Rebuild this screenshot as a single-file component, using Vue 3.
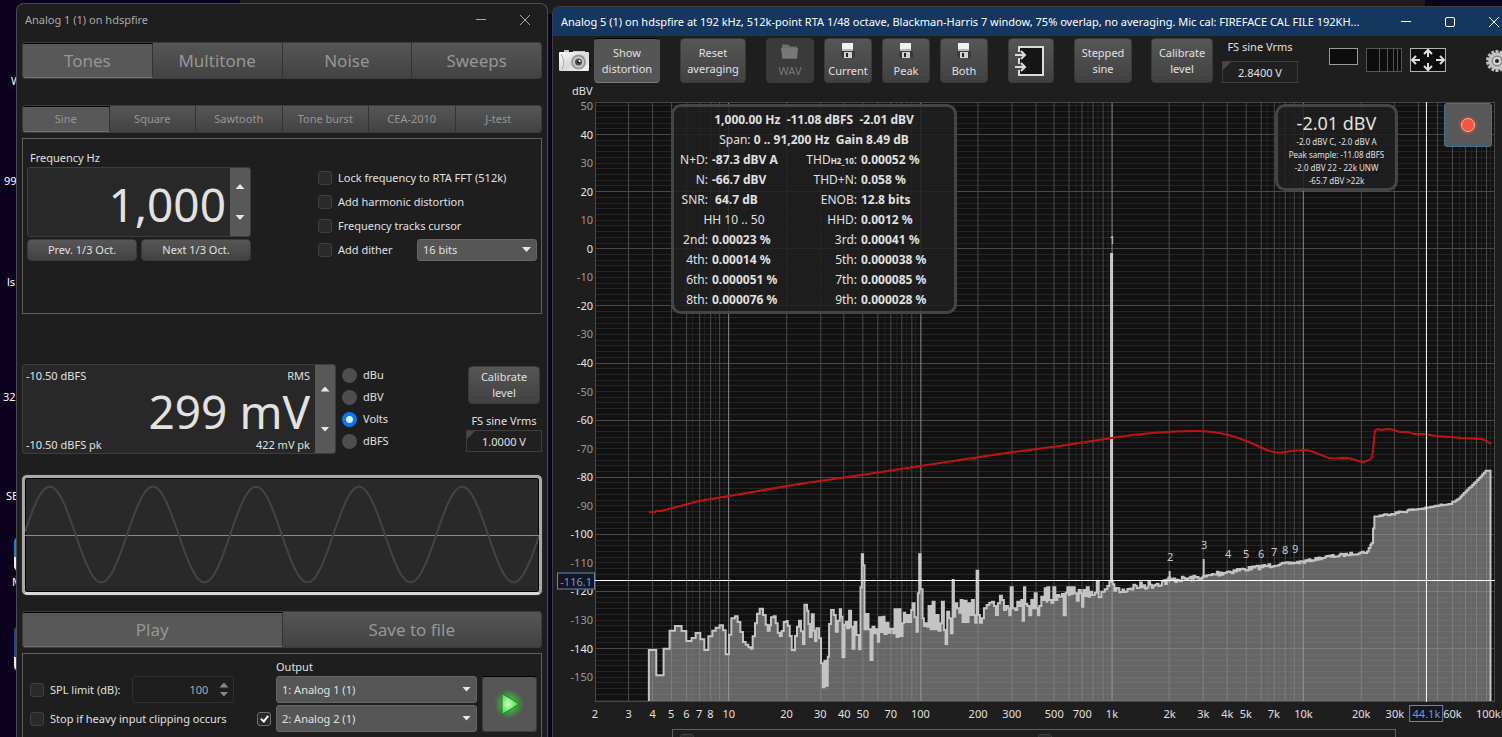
<script setup>
import { ref } from 'vue'

const mainTabs = ['Tones', 'Multitone', 'Noise', 'Sweeps']
const toneTabs = ['Sine', 'Square', 'Sawtooth', 'Tone burst', 'CEA-2010', 'J-test']
const mainTab = ref('Tones')
const toneTab = ref('Sine')
const units = ['dBu', 'dBV', 'Volts', 'dBFS']
const unit = ref('Volts')
const options = ['Lock frequency to RTA FFT (512k)', 'Add harmonic distortion', 'Frequency tracks cursor']

const desktopLabels = [
  { text: 'W', x: 11, y: 73 },
  { text: '99', x: 4, y: 173 },
  { text: 'ls', x: 7, y: 274 },
  { text: '32', x: 3, y: 389 },
  { text: 'SE', x: 6, y: 488 },
  { text: 'M', x: 12, y: 574 }
]

/* Plot geometry, in view box units */
const W = 899
const H = 600
const DB_TOP = 51.4
const DB_BOTTOM = -158.7
const F_MIN = 2
const F_MAX = 100000
const fx = f => (Math.log10(f / F_MIN) / Math.log10(F_MAX / F_MIN)) * W
const dy = d => ((DB_TOP - d) / (DB_TOP - DB_BOTTOM)) * H
const px = v => (v / W) * 100 + '%'
const py = v => (v / H) * 100 + '%'
const snap = v => Math.round(v - 0.5) + 0.5

const minorRows = []
for (let d = 50; d > DB_BOTTOM; d -= 2) if (d % 20 !== 0) minorRows.push(snap(dy(d)))
const majorRows = []
for (let d = 40; d > DB_BOTTOM; d -= 20) majorRows.push(snap(dy(d)))

const decades = [10, 100, 1000, 10000].map(f => snap(fx(f)))
const freqLines = []
const halfLines = []
for (const base of [1, 10, 100, 1000, 10000]) {
  for (let m = 2; m < 10; m++) {
    if (base * m > F_MIN) freqLines.push(snap(fx(base * m)))
    if (m > 5) halfLines.push(snap(fx(base * (m + 0.5))))
  }
}
const rowsPath = rows => rows.map(y => `M0 ${y}H${W}`).join('')
const colsPath = cols => cols.map(x => `M${x} 0V${H}`).join('')

const dbLabels = []
for (let d = 50; d >= -150; d -= 10) dbLabels.push({ d, top: py(dy(d)), major: d % 20 === 0 })

const freqLabels = [
  [2, '2'], [3, '3'], [4, '4'], [5, '5'], [6, '6'], [7, '7'], [8, '8'], [10, '10'], [20, '20'],
  [30, '30'], [40, '40'], [50, '50'], [70, '70'], [100, '100'], [200, '200'], [300, '300'],
  [500, '500'], [700, '700'], [1000, '1k'], [2000, '2k'], [3000, '3k'], [4000, '4k'], [5000, '5k'],
  [7000, '7k'], [10000, '10k'], [20000, '20k'], [30000, '30k'], [40000, '40k'], [60000, '60k'],
  [100000, '100kHz']
].map(([f, text]) => ({ text, left: px(fx(f)) }))

/* Spectrum bins as [start, level] pairs, three counts to one view box unit */
const bins = [
  298, 450, 320, 526, 342, 446, 360, 392, 376, 378, 396, 393, 410, 423, 426, 414, 438, 399, 452, 418,
  464, 450, 476, 409, 488, 392, 498, 383, 510, 376, 520, 391, 528, 463, 538, 404, 545, 355, 556, 349,
  564, 366, 572, 396, 580, 426, 588, 434, 596, 442, 604, 446, 609, 409, 616, 370, 622, 341, 630, 326,
  640, 345, 648, 374, 654, 392, 660, 376, 664, 352, 672, 349, 678, 370, 684, 398, 690, 408, 696, 393,
  702, 366, 710, 363, 714, 377, 720, 408, 726, 450, 732, 451, 736, 408, 742, 380, 748, 362, 754, 394,
  760, 432, 764, 314, 772, 332, 776, 372, 780, 411, 786, 343, 792, 392, 796, 423, 800, 385, 808, 415,
  814, 490, 819, 562, 824, 482, 828, 557, 834, 470, 838, 372, 844, 330, 852, 345, 858, 395, 864, 362,
  870, 328, 874, 350, 878, 472, 884, 374, 888, 365, 892, 385, 898, 332, 904, 380, 908, 446, 914, 366,
  920, 405, 928, 448, 932, 262, 936, 163, 940, 196, 944, 388, 950, 342, 956, 388, 962, 480, 968, 380,
  974, 400, 980, 388, 984, 425, 988, 352, 994, 396, 1000, 350, 1004, 402, 1010, 368, 1016, 398,
  1022, 386, 1030, 400, 1034, 328, 1040, 411, 1046, 328, 1052, 408, 1058, 370, 1062, 338, 1066, 366,
  1072, 345, 1078, 366, 1084, 330, 1088, 310, 1094, 352, 1100, 395, 1104, 280, 1108, 163, 1112, 268,
  1118, 355, 1122, 378, 1128, 370, 1132, 380, 1136, 318, 1142, 388, 1148, 305, 1154, 388, 1160, 345,
  1166, 392, 1172, 370, 1176, 305, 1182, 390, 1187, 432, 1192, 335, 1198, 355, 1203, 400, 1208, 240,
  1212, 350, 1216, 310,
  1222, 325, 1228, 338, 1232, 300, 1238, 366, 1244, 302, 1250, 366, 1256, 310, 1262, 345, 1266, 300,
  1272, 345, 1276, 368, 1280, 212, 1285, 345, 1290, 368, 1296, 355, 1302, 325, 1310, 315, 1318, 308,
  1326, 305, 1332, 318, 1338, 345, 1344, 310, 1350, 287, 1356, 300, 1362, 330, 1368, 318, 1374, 325,
  1378, 346, 1382, 262, 1388, 325, 1396, 330, 1402, 305, 1408, 318, 1414, 300, 1418, 362, 1422, 262,
  1426, 312, 1432, 318, 1438, 346, 1444, 300, 1448, 325, 1454, 280, 1460, 325, 1464, 346, 1468, 318,
  1474, 290, 1480, 300, 1484, 265, 1490, 305, 1492, 262, 1498, 300, 1504, 308, 1510, 262, 1516, 300,
  1522, 285, 1528, 290, 1536, 282, 1541, 346, 1547, 278, 1552, 262, 1556, 285, 1560, 262, 1564, 282,
  1568, 262, 1574, 280, 1580, 302, 1586, 270, 1592, 280, 1596, 320, 1600, 270, 1604, 288, 1610, 262,
  1616, 290, 1620, 275, 1626, 285, 1634, 278, 1640, 245, 1646, 292, 1654, 275, 1664, 268, 1672, 258,
  1678, 245
]

/* Noise floor above 1 kHz: [start, level, ripple] */
const floor = [
  [1688, 262, 9], [1712, 275, 12], [1740, 262, 12], [1800, 254, 12], [1860, 240, 8], [1960, 232, 7],
  [2000, 220, 9], [2030, 215, 8], [2080, 208, 6], [2170, 195, 4], [2260, 185, 4], [2320, 172, 5],
  [2380, 165, 4], [2450, 155, 3], [2463, 130, 0], [2472, 50, 3], [2530, 40, 4], [2580, 30, 2],
  [2620, 25, 2], [2700, 10, 2], [2725, -5, 1], [2760, -40, 0], [2780, -60, 0], [2806, -88, 0],
  [2820, -88, 0]
]

function buildSpectrum() {
  const pts = []
  for (let i = 0; i < bins.length; i += 2) pts.push([bins[i], bins[i + 1]])
  let seed = 7
  const rnd = () => {
    seed = (seed * 16807) % 2147483647
    return seed / 2147483647 - 0.5
  }
  for (let i = 0; i < floor.length - 1; i++) {
    const [x0, y0, a] = floor[i]
    const [x1, y1] = floor[i + 1]
    for (let x = x0; x < x1; x += 5) {
      pts.push([x, y0 + ((y1 - y0) * (x - x0)) / (x1 - x0) + rnd() * 2 * a])
    }
  }
  const X = v => (v / 3 - 45.5).toFixed(1)
  const Y = v => (v / 3 + 398).toFixed(1)
  let d = `M${X(298)} ${H - 1}`
  for (const [x, y] of pts) d += `H${X(x)}V${Y(y)}`
  return d + `H${X(2820)}V${H - 1}`
}
const spectrum = buildSpectrum()
const harmonicSpikes = 'M574 480V469M608 476V457'

const limit =
  'M54 410H60L61 409H66L70 408L104 399L134 394L204 382L266 373L325 364L404 352L464 344L516 336Q560 329 600 329' +
  'C625 329 642 335 660 343C674 350 682 352 690 350C702 348 710 347 718 350C728 354 734 358 744 356' +
  'C756 354 758 359 767 360C778 357 776 360 779 329Q781 326 785 328L793 327L798 328L804 330L812 330' +
  'L818 332L828 332L840 334L854 335L866 336L886 337Q892 339 895 342'

const harmonics = [
  ['1', 516.5, 138], ['2', 574.5, 455], ['3', 608.5, 443], ['4', 632.5, 452], ['5', 650.5, 452],
  ['6', 665.5, 452], ['7', 678.5, 450], ['8', 689.5, 448], ['9', 699.5, 447]
].map(([text, x, y]) => ({ text, left: px(x), top: py(y) }))

const cursorX = snap(fx(44100))
const cursorY = snap(dy(-116.3))

const readings = [
  ['2nd:', '0.00023 %', '3rd:', '0.00041 %'],
  ['4th:', '0.00014 %', '5th:', '0.000038 %'],
  ['6th:', '0.000051 %', '7th:', '0.000085 %'],
  ['8th:', '0.000076 %', '9th:', '0.000028 %']
]

let sine = ''
for (let x = 0; x <= 512; x += 4) {
  sine += `${x ? 'L' : 'M'}${x} ${(56.5 - 48 * Math.sin(((x + 1) / 102.7) * 2 * Math.PI)).toFixed(1)}`
}

const gearTeeth = Array.from({ length: 14 }, (_, i) => `rotate(${(i * 360) / 14} 11 11)`)
</script>

<template>
  <div class="desktop">
    <span class="desk-title">Photo - 4oor</span>
    <span
      v-for="l in desktopLabels"
      :key="l.text"
      class="desk-label"
      :style="{ left: l.x + 'px', top: l.y + 'px' }"
    >{{ l.text }}</span>
    <i class="desk-icon first"></i>
    <i class="desk-icon second"></i>
    <div class="behind"></div>

    <section class="window generator">
      <header class="titlebar">
        <h1>Analog 1 (1) on hdspfire</h1>
        <button aria-label="Minimize"><svg width="12" height="12"><path d="M1 5.500h10" /></svg></button>
        <button aria-label="Close"><svg width="12" height="12"><path d="M1 1l10 10M11 1L1 11" /></svg></button>
      </header>

      <nav class="tabs big">
        <button v-for="t in mainTabs" :key="t" :class="{ on: t === mainTab }" @click="mainTab = t">{{ t }}</button>
      </nav>
      <nav class="tabs small">
        <button v-for="t in toneTabs" :key="t" :class="{ on: t === toneTab }" @click="toneTab = t">{{ t }}</button>
      </nav>

      <div class="panel tone">
        <div class="freq">
          <label for="freq">Frequency Hz</label>
          <div class="spinner">
            <input id="freq" class="huge" value="1,000" />
            <div class="steps">
              <button aria-label="Increase frequency"><i class="up"></i></button>
              <button aria-label="Decrease frequency"><i class="down"></i></button>
            </div>
          </div>
          <div class="thirds">
            <button class="btn">Prev. 1/3 Oct.</button>
            <button class="btn">Next 1/3 Oct.</button>
          </div>
        </div>
        <div class="options">
          <label v-for="o in options" :key="o" class="check"><input type="checkbox" />{{ o }}</label>
          <div class="dither">
            <label class="check"><input type="checkbox" />Add dither</label>
            <span class="select">
              <select aria-label="Dither bits"><option>16 bits</option></select>
            </span>
          </div>
        </div>
      </div>

      <div class="level">
        <div class="spinner">
          <div class="readout">
            <span>-10.50 dBFS</span><span class="r">RMS</span>
            <input class="huge" aria-label="Level" value="299 mV" />
            <span>-10.50 dBFS pk</span><span class="r">422 mV pk</span>
          </div>
          <div class="steps">
            <button aria-label="Increase level"><i class="up"></i></button>
            <button aria-label="Decrease level"><i class="down"></i></button>
          </div>
        </div>
        <div class="units">
          <label v-for="u in units" :key="u"><input v-model="unit" type="radio" name="unit" :value="u" />{{ u }}</label>
        </div>
        <div class="calibrate">
          <button class="btn">Calibrate<br />level</button>
          <label for="fs1">FS sine Vrms</label>
          <span class="field"><input id="fs1" value="1.0000 V" /></span>
        </div>
      </div>

      <div class="wave">
        <svg viewBox="0 0 512 114" preserveAspectRatio="none">
          <path class="mid" d="M0 57.5H512" />
          <path class="sine" :d="sine" />
        </svg>
      </div>

      <nav class="tabs action">
        <button class="on">Play</button>
        <button>Save to file</button>
      </nav>

      <div class="panel output">
        <span class="out-label">Output</span>
        <div class="spl">
          <label class="check"><input type="checkbox" />SPL limit (dB):</label>
          <span class="number">
            <input aria-label="SPL limit" value="100" />
            <span class="ticks"><i class="up"></i><i class="down"></i></span>
          </span>
        </div>
        <span class="select first">
          <select aria-label="Output 1"><option>1: Analog 1 (1)</option></select>
        </span>
        <label class="check clip"><input type="checkbox" />Stop if heavy input clipping occurs</label>
        <label class="check second-on"><input type="checkbox" checked aria-label="Enable second output" /></label>
        <span class="select second">
          <select aria-label="Output 2"><option>2: Analog 2 (1)</option></select>
        </span>
        <button class="play" aria-label="Start">
          <svg width="36" height="36" viewBox="0 0 36 36">
            <defs>
              <radialGradient id="glow"><stop offset=".3" stop-color="#35e835" stop-opacity=".75" /><stop offset="1" stop-color="#35c835" stop-opacity="0" /></radialGradient>
              <radialGradient id="core" cx=".35" cy=".5"><stop offset="0" stop-color="#d6ffd0" /><stop offset="1" stop-color="#3ce03c" /></radialGradient>
            </defs>
            <circle cx="17" cy="18" r="15" fill="url(#glow)" />
            <path d="M10 7.500v21l17.500-10.500z" fill="url(#core)" stroke="#118a14" />
          </svg>
        </button>
      </div>
    </section>

    <section class="window analyzer">
      <header class="titlebar">
        <h1>Analog 5 (1) on hdspfire at 192 kHz, 512k-point RTA 1/48 octave, Blackman-Harris 7 window, 75% overlap, no averaging. Mic cal: FIREFACE CAL FILE 192KH...</h1>
        <button aria-label="Minimize"><svg width="12" height="12"><path d="M1 5.500h10" /></svg></button>
        <button aria-label="Maximize"><svg width="12" height="12"><rect x="1.500" y="1.500" width="9" height="9" rx="1.500" /></svg></button>
        <button aria-label="Close"><svg width="12" height="12"><path d="M1 1l10 10M11 1L1 11" /></svg></button>
      </header>

      <div class="toolbar">
        <button class="plain camera" aria-label="Capture">
          <svg width="31" height="22" viewBox="0 0 31 22">
            <defs><linearGradient id="body" x1="0" y1="0" x2="1" y2="1"><stop offset="0" stop-color="#fff" /><stop offset=".5" stop-color="#d8d8d8" /><stop offset="1" stop-color="#f4f4f4" /></linearGradient></defs>
            <path d="M5 0h5v2H5zM14 1h12v3H14z" fill="#c9c9c9" />
            <rect x="0" y="2" width="30" height="19" rx="1" fill="url(#body)" />
            <path d="M2 4q5 8 1 15" fill="none" stroke="#aaa" />
            <circle cx="19.500" cy="12" r="7.500" fill="#999" />
            <circle cx="19.500" cy="12" r="5.500" fill="#c8c8c8" />
            <circle cx="19.500" cy="12" r="3.500" fill="#505050" />
            <circle cx="19.500" cy="12" r="1.500" fill="#111" />
            <circle cx="20.500" cy="11" r="1" fill="#fff" />
          </svg>
        </button>
        <button class="btn pressed distortion">Show<br />distortion</button>
        <button class="btn reset">Reset<br />averaging</button>
        <div class="saves">
          <button class="btn" disabled>
            <svg width="18" height="18" viewBox="0 0 18 18"><path d="M1 2.500h6l2 2h7v12H1.500z" fill="#6e6e6e" /><path d="M0 6h17l-1 10.500H1.500z" fill="#787878" /></svg>
            WAV
          </button>
          <button v-for="s in ['Current', 'Peak', 'Both']" :key="s" class="btn">
            <svg width="18" height="18" viewBox="0 0 18 18">
              <rect x="3" y="1" width="11" height="8" fill="#eef3f6" />
              <path d="M3 7h11v2H3z" fill="#b4bcc2" />
              <path d="M2 9h14v7H4l-2-2z" fill="#3a3a3a" />
              <rect x="5" y="10" width="8" height="6" fill="#d2d2d2" />
              <rect x="7" y="11" width="2" height="4" fill="#222" />
            </svg>
            {{ s }}
          </button>
        </div>
        <button class="btn import" aria-label="Import">
          <svg width="32" height="32" viewBox="0 0 32 32">
            <rect x="4" y="2" width="24" height="28" fill="#151515" stroke="#dcdcdc" stroke-width="2" />
            <path d="M3 10h4M3 22h4" stroke="#4a4a4a" stroke-width="6" />
            <path d="M0 10h10M6 6l4 4-4 4M0 22h10M6 18l4 4-4 4" fill="none" stroke="#dcdcdc" stroke-width="2" />
          </svg>
        </button>
        <button class="btn stepped">Stepped<br />sine</button>
        <button class="btn cal">Calibrate<br />level</button>
        <div class="fs">
          <label for="fs2">FS sine Vrms</label>
          <span class="field"><input id="fs2" value="2.8400 V" /></span>
        </div>
        <div class="views">
          <button class="plain" aria-label="Single view"><svg width="29" height="26"><rect x=".5" y="1.500" width="28" height="16" fill="#0d0d0d" stroke="#9a9a9a" /></svg></button>
          <button class="plain" aria-label="Grid view"><svg width="36" height="26"><rect x=".5" y="1.500" width="35" height="23" fill="#0d0d0d" stroke="#555" /><path d="M13.500 1v24M21.500 1v24M27.500 1v24M31.500 1v24" stroke="#555" /></svg></button>
          <button class="plain" aria-label="Fit to window">
            <svg width="36" height="26"><rect x=".5" y="1.500" width="35" height="23" fill="#0d0d0d" stroke="#b0b0b0" /><path d="M2 13h8M6 9l-4 4 4 4M34 13h-8M30 9l4 4-4 4M18 3v7M14 7l4-4 4 4M18 23v-7M14 19l4 4 4-4" fill="none" stroke="#ddd" stroke-width="2" /></svg>
          </button>
        </div>
        <button class="plain gear" aria-label="Settings">
          <svg width="22" height="22" viewBox="0 0 22 22">
            <rect v-for="t in gearTeeth" :key="t" x="9.500" y="0" width="3" height="5" fill="#bdbdbd" :transform="t" />
            <circle cx="11" cy="11" r="8.500" fill="#c4c4c4" />
            <circle cx="11" cy="11" r="5.500" fill="#8a8a8a" />
            <circle cx="11" cy="11" r="4" fill="#d6d6d6" />
            <circle cx="11" cy="11" r="2" fill="#222" />
          </svg>
        </button>
      </div>

      <div class="chart">
        <span class="axis-unit">dBV</span>
        <div class="y-axis">
          <span v-for="l in dbLabels" :key="l.d" :class="{ major: l.major }" :style="{ top: l.top }">{{ l.d }}</span>
          <span class="cursor-tag" :style="{ top: py(cursorY) }">-116.1</span>
        </div>
        <div class="plot">
          <svg :viewBox="`0 0 ${W} ${H}`" preserveAspectRatio="none">
            <path class="minor" :d="rowsPath(minorRows)" />
            <path class="minor" :d="colsPath(halfLines)" />
            <path class="line" :d="rowsPath(majorRows)" />
            <path class="line" :d="colsPath(freqLines)" />
            <path class="decade" :d="colsPath(decades)" />
            <path class="fill" :d="spectrum" />
            <path class="spikes" :d="harmonicSpikes" />
            <path class="tone-peak" d="M516 478V151" />
            <path class="limit" :d="limit" />
            <rect class="frame" x=".5" y=".5" :width="W - 1" :height="H - 1" />
            <path class="cursor" :d="`M0 ${cursorY}H${W}M${cursorX} 0V${H}`" />
          </svg>
          <span v-for="h in harmonics" :key="h.text" class="harmonic" :style="{ left: h.left, top: h.top }">{{ h.text }}</span>

          <table class="stats">
            <colgroup><col class="c1" /><col class="c2" /><col class="c3" /><col /></colgroup>
            <tbody>
              <tr><td class="mid" colspan="4"><b>1,000.00 Hz&nbsp; -11.08 dBFS&nbsp; -2.01 dBV</b></td></tr>
              <tr><td class="mid" colspan="4">Span: <b>0 .. 91,200 Hz &nbsp;Gain 8.49 dB</b></td></tr>
              <tr><th>N+D:</th><td>-87.3 dBV A</td><th>THD<small>H2_10</small>:</th><td>0.00052 %</td></tr>
              <tr><th>N:</th><td>-66.7 dBV</td><th>THD+N:</th><td>0.058 %</td></tr>
              <tr><th>SNR:</th><td>&nbsp;64.7 dB</td><th>ENOB:</th><td>12.8 bits</td></tr>
              <tr><td class="mid" colspan="2">HH 10 .. 50</td><th>HHD:</th><td>0.0012 %</td></tr>
              <tr v-for="r in readings" :key="r[0]"><th>{{ r[0] }}</th><td>{{ r[1] }}</td><th>{{ r[2] }}</th><td>{{ r[3] }}</td></tr>
            </tbody>
          </table>

          <div class="meter">
            <strong>-2.01 dBV</strong>
            <span>-2.0 dBV C, -2.0 dBV A</span>
            <span>Peak sample: -11.08 dBFS</span>
            <span>-2.0 dBV 22 - 22k UNW</span>
            <span>-65.7 dBV &gt;22k</span>
          </div>
          <button class="record" aria-label="Record"><i></i></button>
        </div>
        <div class="x-axis">
          <span v-for="l in freqLabels" :key="l.text" :style="{ left: l.left }">{{ l.text }}</span>
          <span class="cursor-tag" :style="{ left: px(cursorX) }">44.1k</span>
        </div>
      </div>
      <div class="legend"><input type="checkbox" aria-label="Show trace" /><input type="checkbox" aria-label="Show peak" /></div>
    </section>
  </div>
</template>

<style>
html,
body {
  background: #0d0420;
  overflow: hidden;
}
</style>

<style scoped>
* {
  box-sizing: border-box;
}
.desktop {
  position: relative;
  display: flex;
  gap: 4px;
  height: 100vh;
  padding: 3px 0 0 16px;
  background: #0c0220;
  overflow: hidden;
  color: #e0e0e0;
  font: 11px/16px "Noto Sans", "Open Sans", sans-serif;
}
button,
input,
select {
  font: inherit;
  color: inherit;
  margin: 0;
  padding: 0;
  border: 0;
  background: none;
}
.behind {
  position: absolute;
  left: 240px;
  right: 77px;
  top: 0;
  height: 14px;
  background: #1d1d1d;
}
.desk-title {
  position: absolute;
  left: 81px;
  top: -12px;
  color: #fff;
}
.desk-label {
  position: absolute;
  color: #fff;
}
.desk-icon {
  position: absolute;
  left: 14px;
  width: 10px;
  border-radius: 5px 0 0 5px;
}
.desk-icon.first {
  top: 537px;
  height: 34px;
  background: linear-gradient(#2f7fc0 60%, #eee 60%);
}
.desk-icon.second {
  top: 626px;
  height: 45px;
  background: linear-gradient(#2c3e8c 70%, #eee 70%);
}
.window {
  position: relative;
  display: flex;
  flex-direction: column;
  background: #1e1e1e;
  overflow: hidden;
}
.titlebar {
  display: flex;
  align-items: center;
  flex: none;
}
.titlebar h1 {
  flex: 1;
  margin: 0;
  font-size: 11px;
  font-weight: 400;
  white-space: nowrap;
}
.titlebar button {
  width: 44px;
  height: 28px;
}
.titlebar svg {
  display: block;
  margin: auto;
  fill: none;
  stroke: currentColor;
}

/* Signal generator */
.generator {
  flex: 0 0 532px;
  padding: 0 5px;
  border: 1px solid #4c4c4c;
  border-width: 1px 1px 0;
  border-radius: 8px 8px 0 0;
}
.generator .titlebar {
  height: 32px;
  margin-right: -5px;
  padding-left: 3px;
  color: #aaa;
}
.tabs {
  display: flex;
  flex: none;
  border: 1px solid #3c3c3c;
  border-radius: 3px;
  overflow: hidden;
  color: #969696;
}
.tabs button {
  flex: 1;
  border-right: 1px solid #333;
  background: linear-gradient(#565656, #424242);
}
.tabs button:last-child {
  border-right: 0;
}
.tabs button.on {
  border-top: 1px solid #000;
  border-bottom: 1px solid #727272;
  background: #585858;
}
.tabs.big,
.tabs.action {
  height: 37px;
  font-size: 17px;
}
.tabs.big {
  margin-top: 6px;
}
.tabs.small {
  height: 28px;
  margin-top: 26px;
}
.panel {
  flex: none;
  border: 1px solid #606060;
}
.tone {
  display: flex;
  justify-content: space-between;
  height: 176px;
  margin-top: 5px;
  padding: 11px 4px 0;
}
.freq {
  width: 224px;
}
.freq label {
  display: block;
  height: 17px;
  padding-left: 3px;
}
.spinner {
  display: flex;
  border: 1px solid #3e3e3e;
  border-radius: 3px;
  background: #282828;
  overflow: hidden;
}
.freq .spinner {
  height: 70px;
}
.huge {
  flex: 1;
  min-width: 0;
  width: 100%;
  color: #e2e2e2;
  font-size: 46px;
  text-align: right;
}
.freq .huge {
  padding: 4px 4px 0 0;
}
.steps {
  display: flex;
  flex-direction: column;
  justify-content: center;
  flex: 0 0 20px;
  background: #585858;
}
.steps button {
  height: 31px;
}
.level .steps button {
  height: 40px;
}
.up,
.down {
  display: block;
  width: 9px;
  height: 5px;
  margin: 0 auto;
  background: #e8e8e8;
  clip-path: polygon(50% 0, 100% 100%, 0 100%);
}
.down {
  clip-path: polygon(0 0, 100% 0, 50% 100%);
}
.thirds {
  display: flex;
  gap: 4px;
  margin-top: 2px;
}
.thirds .btn {
  flex: 1;
  height: 22px;
}
.btn {
  border: 1px solid #3a3a3a;
  border-radius: 4px;
  background: linear-gradient(#565656, #414141);
  line-height: 16px;
}
.options {
  display: flex;
  flex-direction: column;
  width: 219px;
  padding-top: 16px;
}
.check {
  display: flex;
  align-items: center;
  gap: 6px;
  height: 24px;
  white-space: nowrap;
}
.check input,
.legend input {
  position: relative;
  flex: none;
  width: 14px;
  height: 14px;
  border: 1px solid #404040;
  border-radius: 3px;
  background: #2a2a2a;
  appearance: none;
}
.check input:checked {
  border-color: #707070;
}
.check input:checked::after {
  content: "";
  position: absolute;
  left: 4px;
  top: 1px;
  width: 3px;
  height: 6px;
  border: solid #fff;
  border-width: 0 2px 2px 0;
  transform: rotate(38deg);
}
.dither {
  display: flex;
  align-items: center;
  justify-content: space-between;
}
.dither .select {
  width: 120px;
  height: 22px;
}
.select {
  position: relative;
  display: block;
}
.select select {
  display: block;
  width: 100%;
  height: 100%;
  padding: 0 5px;
  border: 1px solid #666;
  border-radius: 3px;
  background: #565656;
  appearance: none;
}
.select::after {
  content: "";
  position: absolute;
  right: 6px;
  top: calc(50% - 3px);
  width: 9px;
  height: 5px;
  background: #e8e8e8;
  clip-path: polygon(0 0, 100% 0, 50% 100%);
  pointer-events: none;
}
.level {
  display: flex;
  flex: none;
  height: 90px;
  margin-top: 50px;
}
.level .spinner {
  width: 314px;
}
.readout {
  flex: 1;
  display: grid;
  grid-template-columns: 1fr 1fr;
  grid-template-rows: 22px 1fr 20px;
  align-items: center;
  padding: 0 5px 0 3px;
}
.readout .huge {
  grid-column: 1 / 3;
  height: 48px;
}
.r {
  text-align: right;
}
.units {
  flex: 1;
  padding-left: 6px;
}
.units label {
  display: flex;
  align-items: center;
  gap: 6px;
  height: 22px;
}
.units input {
  width: 15px;
  height: 15px;
  border-radius: 50%;
  background: #4e4e4e;
  appearance: none;
}
.units input:checked {
  background: radial-gradient(circle, #dff0ff 3px, #0a78f0 4px);
}
.calibrate {
  display: flex;
  flex-direction: column;
  align-items: center;
  width: 76px;
  padding-top: 2px;
}
.calibrate .btn {
  width: 72px;
  height: 38px;
}
.calibrate label {
  margin: 9px 0 1px;
  white-space: nowrap;
}
.field {
  position: relative;
  display: block;
}
.field input {
  display: block;
  width: 76px;
  height: 22px;
  border: 1px solid #3e3e3e;
  background: #202020;
  text-align: center;
}
.field::before {
  content: "";
  position: absolute;
  left: 1px;
  top: 1px;
  width: 8px;
  height: 8px;
  background: #484848;
  clip-path: polygon(0 0, 100% 0, 0 100%);
}
.wave {
  flex: none;
  height: 120px;
  margin-top: 21px;
  border: 3px solid #a8a8a8;
  border-bottom-color: #d8d8d8;
  border-radius: 5px;
  background: #292929;
  box-shadow: inset 0 0 0 1px #000, 0 0 1px #888;
}
.wave svg {
  display: block;
  width: 100%;
  height: 100%;
  fill: none;
}
.wave .mid {
  stroke: #8a8a8a;
}
.wave .sine {
  stroke: #444;
  stroke-width: 2;
}
.tabs.action {
  margin-top: 16px;
}
.output {
  display: grid;
  grid-template-columns: 1fr 14px 201px 55px;
  grid-template-rows: 20px 27px 27px;
  column-gap: 5px;
  row-gap: 2px;
  flex: 1;
  align-content: start;
  margin-top: 5px;
  padding: 0 4px 0 7px;
  border-bottom: 0;
}
.out-label {
  grid-area: 1 / 3;
  line-height: 26px;
}
.spl {
  grid-area: 2 / 1;
  display: flex;
  align-items: center;
}
.number {
  display: flex;
  align-items: center;
  width: 102px;
  height: 27px;
  margin-left: 12px;
  padding-right: 5px;
  border: 1px solid #303030;
  border-radius: 3px;
  color: #aaa;
}
.number input {
  flex: 1;
  min-width: 0;
  padding-right: 11px;
  text-align: right;
}
.ticks {
  display: grid;
  gap: 4px;
}
.ticks i {
  background: #888;
}
.select.first {
  grid-area: 2 / 3;
}
.clip {
  grid-area: 3 / 1;
  height: 27px;
}
.second-on {
  grid-area: 3 / 2;
  height: 27px;
}
.select.second {
  grid-area: 3 / 3;
}
.play {
  grid-area: 2 / 4 / 4 / 5;
  display: grid;
  place-items: center;
  border: 1px solid #3c3c3c;
  border-top-color: #000;
  border-radius: 3px;
  background: #565656;
}

/* Spectrum analyzer */
.analyzer {
  flex: 1;
  min-width: 0;
  margin-top: 3px;
  border: 1px solid #3f3f3f;
  border-width: 1px 0 0 1px;
  border-radius: 8px 0 0 0;
}
.analyzer .titlebar {
  width: calc(100% + 14px);
  height: 29px;
  padding-left: 8px;
  background: #14365f;
  color: #fff;
}
.analyzer .titlebar h1 {
  min-width: 0;
  overflow: hidden;
}
.analyzer .titlebar button {
  flex: none;
}
.toolbar {
  display: flex;
  flex: none;
  height: 66px;
  padding: 2px 0 0 6px;
  white-space: nowrap;
}
.toolbar > * {
  flex: none;
}
.toolbar .btn {
  height: 45px;
}
.toolbar .pressed {
  border-color: #555;
  border-top-color: #000;
  border-bottom-color: #777;
  background: #555;
}
.plain svg {
  display: block;
}
.camera {
  height: 45px;
}
.distortion {
  width: 66px;
  margin-left: 4px;
}
.reset {
  width: 66px;
  margin-left: 20px;
}
.saves {
  display: flex;
  gap: 10px;
  margin-left: 20px;
}
.saves .btn {
  width: 48px;
}
.saves svg {
  display: block;
  margin: 0 auto 3px;
}
.saves .btn:disabled {
  background: #3a3a3a;
  color: #777;
}
.import {
  width: 46px;
  margin-left: 20px;
}
.import svg {
  display: block;
  margin: auto;
}
.stepped {
  width: 58px;
  margin-left: 20px;
}
.cal {
  width: 62px;
  margin-left: 19px;
}
.fs {
  width: 76px;
  margin-left: 9px;
  text-align: center;
}
.fs label {
  display: block;
  height: 23px;
  line-height: 18px;
}
.views {
  display: flex;
  gap: 8px;
  margin-left: 31px;
  padding-top: 9px;
}
.views button {
  height: 26px;
}
.gear {
  height: 45px;
  margin-left: 40px;
}
.chart {
  position: relative;
  flex: 1;
  display: grid;
  grid-template-columns: 42px 1fr 7px;
  grid-template-rows: 1fr 27px;
}
.axis-unit {
  position: absolute;
  left: 19px;
  top: -19px;
}
.y-axis,
.x-axis,
.plot {
  position: relative;
}
.y-axis span {
  position: absolute;
  right: 2px;
  transform: translateY(-50%);
  color: #999;
}
.y-axis span.major {
  color: #e8e8e8;
}
.x-axis {
  grid-column: 2;
}
.x-axis span {
  position: absolute;
  top: 4px;
  transform: translateX(-50%);
}
.y-axis .cursor-tag,
.x-axis .cursor-tag {
  padding: 0 2px;
  border: 1px solid #6487c4;
  background: #14171e;
  color: #7397d6;
  line-height: 15px;
}
.y-axis .cursor-tag {
  right: 0;
}
.x-axis .cursor-tag {
  top: 3px;
}
.plot {
  background: #111;
}
.plot > svg {
  position: absolute;
  width: 100%;
  height: 100%;
  fill: none;
}
.plot path {
  vector-effect: non-scaling-stroke;
}
.minor {
  stroke: #252525;
}
.line {
  stroke: #4a4a4a;
}
.decade {
  stroke: #8c8c8c;
}
.frame {
  stroke: #484848;
}
.fill {
  fill: rgba(160, 160, 160, 0.6);
  stroke: #c4c4c4;
  stroke-width: 2;
}
.spikes {
  stroke: #c4c4c4;
  stroke-width: 2;
}
.tone-peak {
  stroke: #cacaca;
  stroke-width: 3;
}
.limit {
  stroke: #c01414;
  stroke-width: 2;
}
.cursor {
  stroke: #fff;
}
.harmonic {
  position: absolute;
  transform: translate(-50%, -50%);
  color: #c8c8c8;
  font-size: 11px;
}
.stats,
.meter {
  position: absolute;
  top: 2px;
  border: 3px solid rgba(80, 80, 80, 0.8);
  border-radius: 10px;
  background: rgba(32, 32, 32, 0.86);
}
.stats {
  left: 76px;
  width: 286px;
  padding: 3px 0 1px;
  border-spacing: 0;
  border-collapse: separate;
  table-layout: fixed;
  font-size: 12px;
  white-space: nowrap;
}
.c1 {
  width: 34px;
}
.c2 {
  width: 86px;
}
.c3 {
  width: 63px;
}
.stats td,
.stats th {
  height: 20px;
  padding: 0 0 0 4px;
  font-weight: 700;
  line-height: 18px;
}
.stats th {
  padding: 0;
  font-weight: 400;
  text-align: right;
}
.stats td.mid {
  padding: 0;
  font-weight: 400;
  text-align: center;
}
.stats b {
  font-weight: 700;
}
small {
  font-size: 8px;
  font-weight: 700;
}
.meter {
  right: 97px;
  display: flex;
  flex-direction: column;
  width: 123px;
  height: 87px;
  align-items: center;
  padding-top: 4px;
  font-size: 8px;
  line-height: 13px;
  white-space: nowrap;
}
.meter strong {
  font-size: 18px;
  font-weight: 400;
  line-height: 24px;
}
.record {
  position: absolute;
  right: 3px;
  top: 1px;
  display: grid;
  place-items: center;
  width: 48px;
  height: 44px;
  border: 1px solid #3f7496;
  border-radius: 3px;
  background: #585858;
}
.record i {
  width: 14px;
  height: 14px;
  border: 1px solid #ffb09a;
  border-radius: 50%;
  background: #f4553f;
  box-shadow: 0 0 4px #e05a40;
}
.legend {
  display: flex;
  gap: 344px;
  flex: none;
  height: 8px;
  margin: 0 106px 0 119px;
  padding: 4px 7px 0;
  border: 1px solid #606060;
  border-bottom: 0;
  overflow: hidden;
}
</style>
